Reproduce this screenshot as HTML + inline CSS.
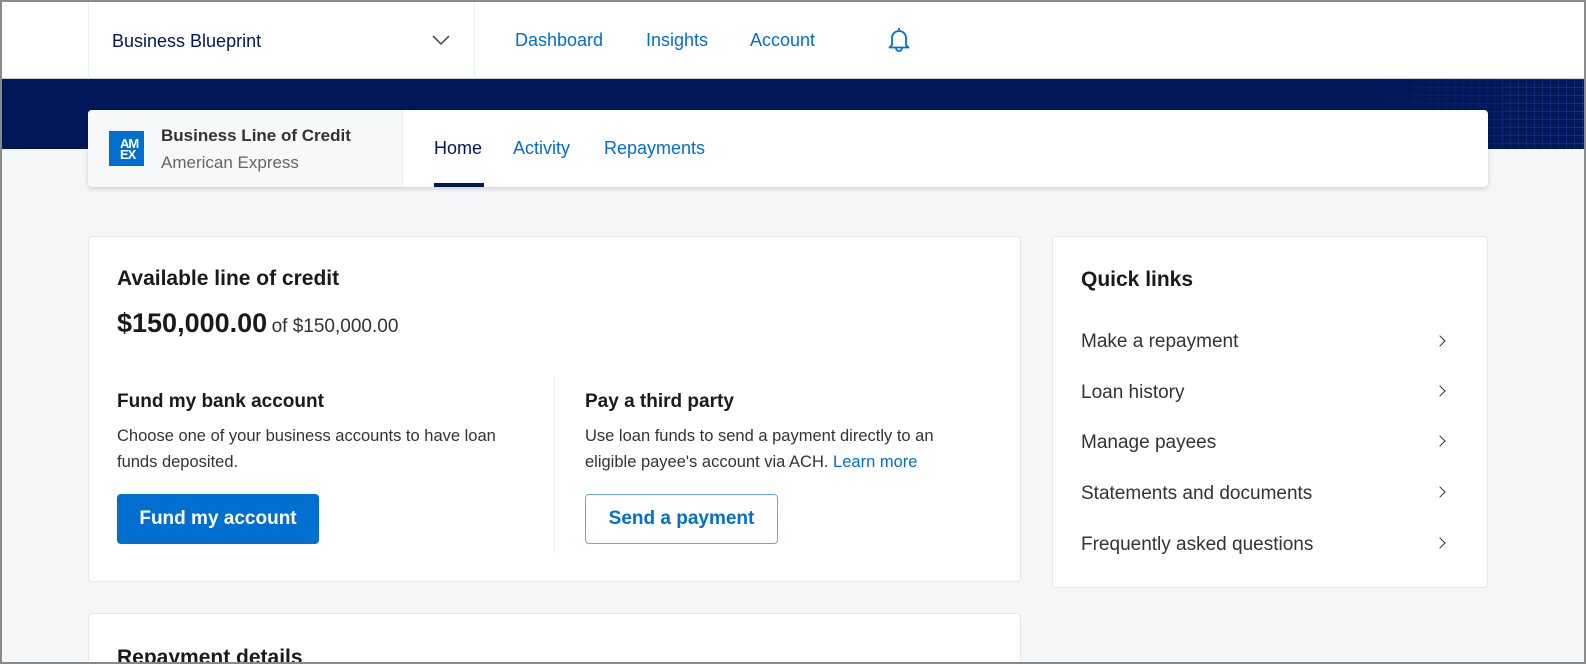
<!DOCTYPE html>
<html style="width:1586px;height:664px;overflow:hidden"><head><meta charset="utf-8"><style>
*{box-sizing:border-box;margin:0;padding:0}
body{width:1586px;height:664px;overflow:hidden;background:#f5f6f8;font-family:"Liberation Sans",Arial,sans-serif;position:relative}
.frame{position:absolute;inset:0;border:2px solid #8a8a8a;pointer-events:none;z-index:10}
.abs{position:absolute}
.hdr{left:0;top:0;width:1586px;height:79px;background:#fff;border-bottom:1px solid #c9ccd6}
.band{left:0;top:79px;width:1586px;height:70px;background:#00175a;overflow:hidden}
.grid{right:0;top:0;width:220px;height:70px;background-image:linear-gradient(90deg,rgba(40,90,200,.35) 1px,transparent 1px),linear-gradient(rgba(40,90,200,.35) 1px,transparent 1px);background-size:8px 8px;-webkit-mask-image:linear-gradient(90deg,transparent,#000);mask-image:linear-gradient(90deg,transparent,#000)}
.blue{color:#006fcf}
.card{background:#fff;border:1px solid #e6e8ec;border-radius:4px}
.sub{left:88px;top:110px;width:1400px;height:77px;background:#fff;border-radius:4px;box-shadow:0 2px 5px rgba(0,0,0,.15)}
.t{position:absolute;white-space:nowrap}
.ql{font-size:19px;color:#333}
.chev{position:absolute;width:8px;height:8px;border-right:1.6px solid #333;border-top:1.6px solid #333;transform:rotate(45deg)}
</style></head><body>
<div class="abs hdr">
 <div class="abs" style="left:88px;top:0;width:1px;height:79px;background:#eceef1"></div>
 <div class="abs" style="left:474px;top:0;width:1px;height:79px;background:#eceef1"></div>
 <div class="t" style="left:112px;top:31px;font-size:18px;color:#00175a">Business Blueprint</div>
 <svg class="abs" style="left:431px;top:34px" width="20" height="12" viewBox="0 0 20 12"><path d="M2 2l8 8 8-8" fill="none" stroke="#53565a" stroke-width="1.6"/></svg>
 <div class="t blue" style="left:515px;top:30px;font-size:18px">Dashboard</div>
 <div class="t blue" style="left:646px;top:30px;font-size:18px">Insights</div>
 <div class="t blue" style="left:750px;top:30px;font-size:18px">Account</div>
 <svg class="abs" style="left:886px;top:26px" width="26" height="28" viewBox="0 0 26 28"><path d="M13 2v2M6 19V12a7 7 0 0 1 14 0v7l2.5 2.5h-19z M10 22a3 3 0 0 0 6 0" fill="none" stroke="#006fcf" stroke-width="1.8" stroke-linejoin="round"/></svg>
</div>
<div class="abs band"><div class="abs grid"></div></div>
<div class="abs sub">
 <div class="abs" style="left:0;top:0;width:315px;height:77px;background:#f7f8f9;border-right:1px solid #eceef1;border-radius:4px 0 0 4px"></div>
 <div class="abs" style="left:21px;top:21px;width:35px;height:35px;background:#006fcf;color:#fff;font-weight:bold;font-size:13px;line-height:11px;padding:7px 0 0 11px;letter-spacing:-1px;overflow:hidden">AM<br>EX</div>
 <div class="t" style="left:73px;top:16px;font-size:17px;font-weight:bold;color:#333">Business Line of Credit</div>
 <div class="t" style="left:73px;top:43px;font-size:17px;color:#666">American Express</div>
 <div class="t" style="left:346px;top:28px;font-size:18px;color:#00175a">Home</div>
 <div class="abs" style="left:346px;top:73px;width:50px;height:4px;background:#00175a"></div>
 <div class="t blue" style="left:425px;top:28px;font-size:18px">Activity</div>
 <div class="t blue" style="left:516px;top:28px;font-size:18px">Repayments</div>
</div>
<div class="abs card" style="left:88px;top:236px;width:933px;height:346px">
 <div class="t" style="left:28px;top:30px;font-size:21px;font-weight:bold;color:#1a1a1a">Available line of credit</div>
 <div class="t" style="left:28px;top:71px;color:#1a1a1a"><span style="font-size:27px;font-weight:bold">$150,000.00</span> <span style="font-size:19px;color:#333">of $150,000.00</span></div>
 <div class="abs" style="left:465px;top:140px;width:1px;height:176px;background:#eceef1"></div>
 <div class="t" style="left:28px;top:154px;font-size:19px;font-weight:bold;color:#1a1a1a">Fund my bank account</div>
 <div class="abs" style="left:28px;top:186px;width:420px;font-size:16.5px;line-height:26px;color:#333">Choose one of your business accounts to have loan funds deposited.</div>
 <div class="abs" style="left:28px;top:257px;width:202px;height:50px;background:#006fcf;border-radius:4px;color:#fff;font-size:19px;font-weight:bold;text-align:center;line-height:50px">Fund my account</div>
 <div class="t" style="left:496px;top:154px;font-size:19px;font-weight:bold;color:#1a1a1a">Pay a third party</div>
 <div class="abs" style="left:496px;top:186px;width:400px;font-size:16.5px;line-height:26px;color:#333">Use loan funds to send a payment directly to an eligible payee's account via ACH. <span class="blue">Learn more</span></div>
 <div class="abs" style="left:496px;top:257px;width:193px;height:50px;border:1.5px solid #66a9e2;border-radius:4px;color:#006fcf;font-size:19px;font-weight:bold;text-align:center;line-height:47px">Send a payment</div>
</div>
<div class="abs card" style="left:1052px;top:236px;width:436px;height:352px"></div>
<div class="t" style="left:1081px;top:268px;font-size:21px;font-weight:bold;color:#1a1a1a">Quick links</div>
<div class="t ql" style="left:1081px;top:331px">Make a repayment</div>
<div class="t ql" style="left:1081px;top:382px">Loan history</div>
<div class="t ql" style="left:1081px;top:432px">Manage payees</div>
<div class="t ql" style="left:1081px;top:483px">Statements and documents</div>
<div class="t ql" style="left:1081px;top:534px">Frequently asked questions</div>
<div class="chev" style="top:337px;left:1436px"></div>
<div class="chev" style="top:387px;left:1436px"></div>
<div class="chev" style="top:437px;left:1436px"></div>
<div class="chev" style="top:488px;left:1436px"></div>
<div class="chev" style="top:539px;left:1436px"></div>
<div class="abs card" style="left:88px;top:613px;width:933px;height:51px;overflow:hidden;border-bottom:none">
 <div class="t" style="left:28px;top:32px;font-size:21px;font-weight:bold;color:#1a1a1a">Repayment details</div>
</div>
<div class="frame"></div>
</body></html>
